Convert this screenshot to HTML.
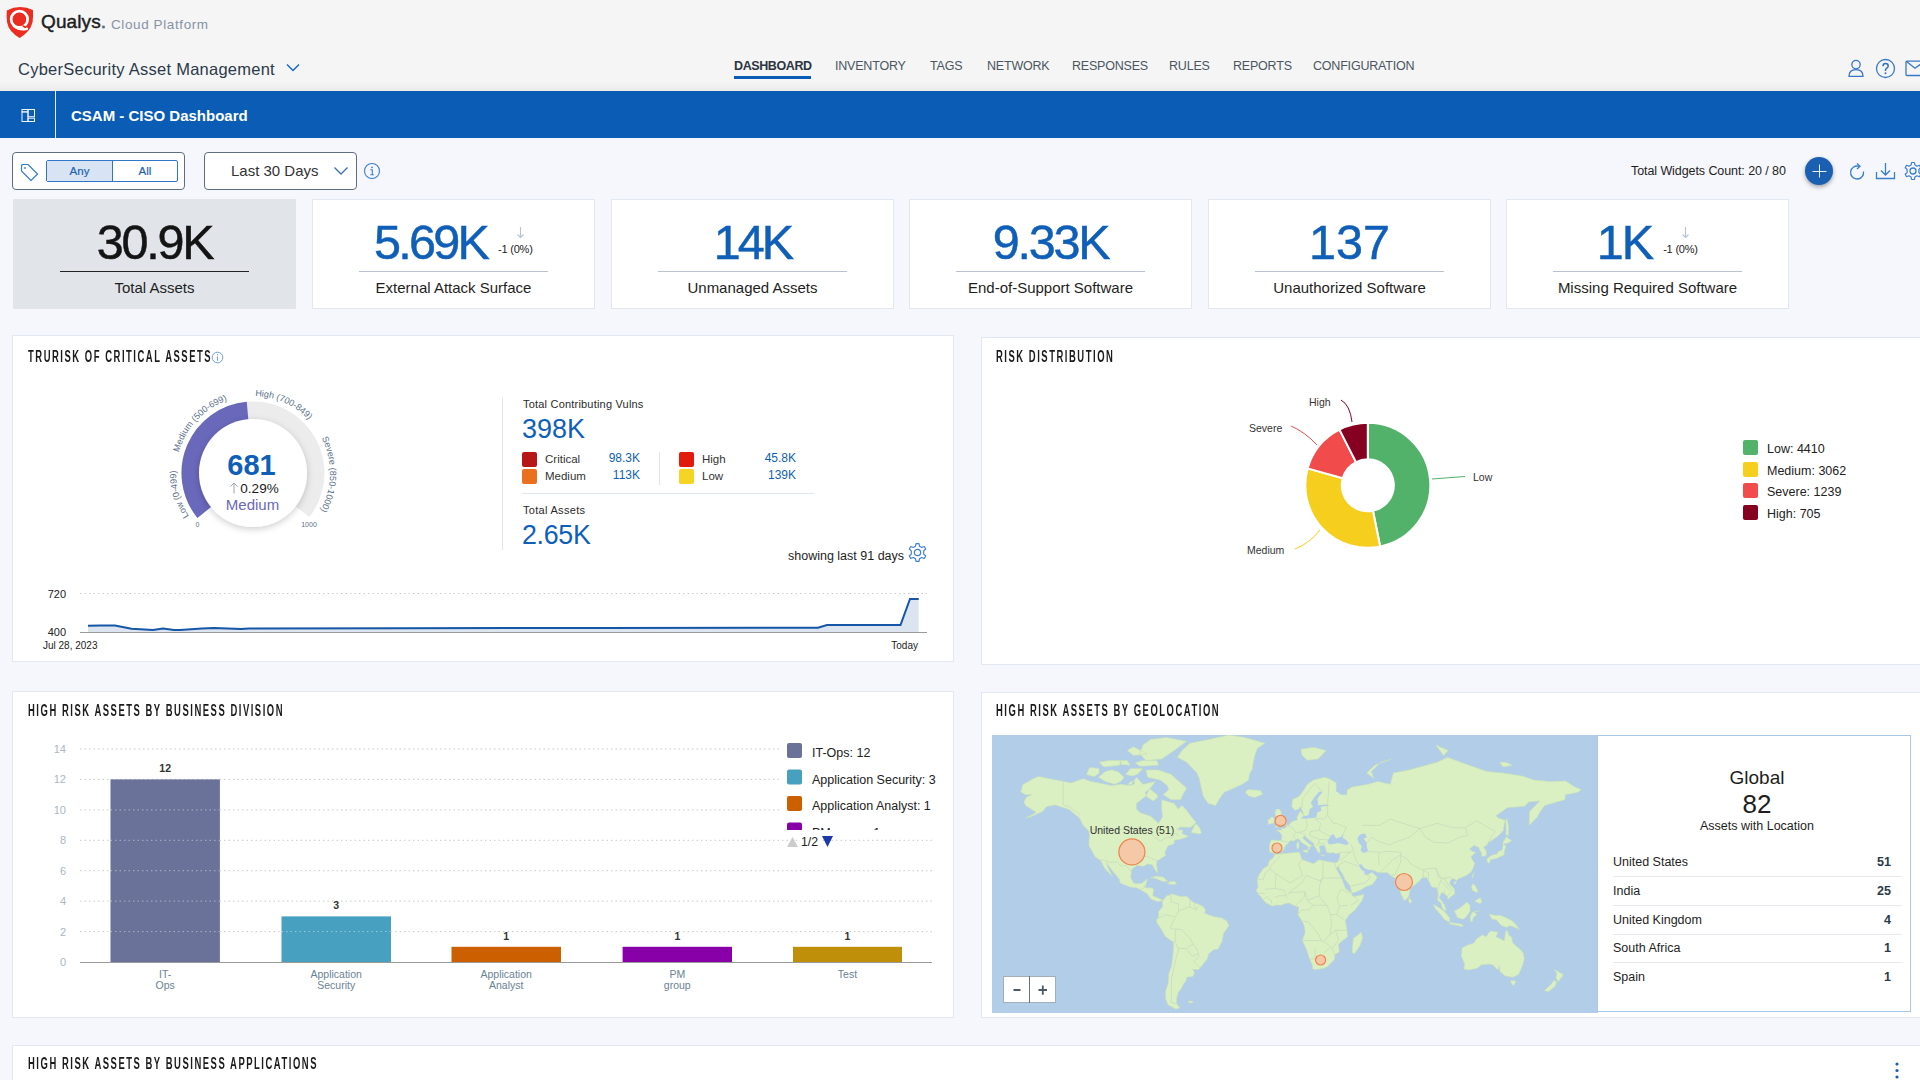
<!DOCTYPE html>
<html><head><meta charset="utf-8">
<style>
*{box-sizing:border-box;margin:0;padding:0}
html,body{width:1920px;height:1080px;overflow:hidden}
body{font-family:"Liberation Sans",sans-serif;background:#f5f7fc;position:relative;color:#222}
.abs{position:absolute}
#hdr{position:absolute;left:0;top:0;width:1920px;height:91px;background:linear-gradient(#f5f5f5 0,#f5f5f5 82px,#ececec 90px,#f0e6e6 91px)}
#bluebar{position:absolute;left:0;top:91px;width:1920px;height:47px;background:#0b5cb5}
.nav{position:absolute;top:58px;font-size:12.5px;color:#4a5560;letter-spacing:-.2px;white-space:nowrap}
.card{position:absolute;background:#fff;border:1px solid #e1e8f2}
.kpi{position:absolute;top:199px;width:283px;height:110px;background:#fff;border:1px solid #e1e8f2}
.kpi .num{position:absolute;left:0;right:0;top:17px;text-align:center;font-size:48.5px;color:#0f5fb8;line-height:50px;white-space:nowrap;-webkit-text-stroke:.5px currentColor}
.kpi .dl{display:inline-block;position:relative;width:35px;height:30px;margin-left:11px;vertical-align:top;top:8px}
.kpi .dt{-webkit-text-stroke:0;position:absolute;left:0;top:16.5px;font-size:11px;line-height:14px;color:#222;letter-spacing:-.2px;white-space:nowrap}
.kpi .rule{position:absolute;left:46px;right:46px;top:71px;height:1px;background:#b9c3cf}
.kpi .lbl{position:absolute;left:0;right:0;top:278px;text-align:center;font-size:15px;color:#1e1e1e}
.wt{position:absolute;font-size:16px;font-weight:bold;color:#1b1b1b;letter-spacing:2.6px;transform-origin:0 0;transform:scaleX(.59);white-space:nowrap}
</style></head>
<body>
<div id="hdr">
  <svg class="abs" style="left:0;top:0" width="40" height="40" viewBox="0 0 40 40">
    <path d="M6.8 10.5 Q19.8 4 33 10 Q33.3 16 32.6 22 Q30.5 31.5 19.6 37.9 Q8.5 31.5 7 22 Q6.4 16 6.8 10.5 Z" fill="#ea2c21"/>
    <circle cx="19.4" cy="19.3" r="8.2" fill="none" stroke="#fff" stroke-width="2.8"/>
    <circle cx="19.4" cy="19.3" r="6.6" fill="#ea2c21"/>
    <path d="M14 26 Q19.5 30.5 26.8 28.8" fill="none" stroke="#fff" stroke-width="2.6" stroke-linecap="round"/>
    <path d="M22.5 25.6 L26 27.5" fill="none" stroke="#ea2c21" stroke-width="1.6"/>
  </svg>
  <div class="abs" style="left:41px;top:11px;font-size:19px;color:#1e1e1e;letter-spacing:.1px;-webkit-text-stroke:.45px #1e1e1e">Qualys<span style="color:#8a94a6">.</span></div>
  <div class="abs" style="left:111px;top:17px;font-size:13.5px;color:#8893a5;letter-spacing:.6px">Cloud Platform</div>
  <div class="abs" style="left:18px;top:60px;font-size:16.5px;color:#2b3a4a;letter-spacing:.25px">CyberSecurity Asset Management</div>
  <svg class="abs" style="left:286px;top:63px" width="14" height="9" viewBox="0 0 14 9"><path d="M1 1.5 L7 7.5 L13 1.5" fill="none" stroke="#1a6bc4" stroke-width="1.5"/></svg>
  <div class="nav" style="top:59px;left:734px;font-weight:bold;color:#2b3440;letter-spacing:-.4px">DASHBOARD</div>
  <div class="abs" style="left:734px;top:76px;width:77px;height:3px;background:#0b5cb5"></div>
  <div class="nav" style="top:59px;left:835px">INVENTORY</div>
  <div class="nav" style="top:59px;left:930px">TAGS</div>
  <div class="nav" style="top:59px;left:987px">NETWORK</div>
  <div class="nav" style="top:59px;left:1072px">RESPONSES</div>
  <div class="nav" style="top:59px;left:1169px">RULES</div>
  <div class="nav" style="top:59px;left:1233px">REPORTS</div>
  <div class="nav" style="top:59px;left:1313px">CONFIGURATION</div>
  <!-- user/help/mail icons -->
  <svg class="abs" style="left:1846px;top:58px" width="20" height="20" viewBox="0 0 20 20"><circle cx="10" cy="6.6" r="4.2" fill="none" stroke="#3a78c6" stroke-width="1.3"/><path d="M3 18.3 Q3 11.6 10 11.6 Q17 11.6 17 18.3 Z" fill="none" stroke="#3a78c6" stroke-width="1.3"/></svg>
  <svg class="abs" style="left:1875px;top:58px" width="21" height="21" viewBox="0 0 21 21"><circle cx="10.5" cy="10.5" r="9" fill="none" stroke="#3a78c6" stroke-width="1.3"/><path d="M8 8.2 Q8 5.5 10.6 5.5 Q13.2 5.5 13.2 8 Q13.2 9.5 11.5 10.3 Q10.5 10.8 10.5 12.3 V13" fill="none" stroke="#2f6fc0" stroke-width="1.5"/><circle cx="10.5" cy="15.3" r=".95" fill="#2f6fc0"/></svg>
  <svg class="abs" style="left:1905px;top:60px" width="15" height="17" viewBox="0 0 15 17"><rect x="1" y="1.2" width="20" height="14.3" rx="1" fill="none" stroke="#3a78c6" stroke-width="1.3"/><path d="M1.5 1.5 L10 8.3 L20 1" fill="none" stroke="#3a78c6" stroke-width="1.3"/></svg>
</div>
<div id="bluebar">
  <div class="abs" style="left:55px;top:0;width:1px;height:47px;background:#e8eef8"></div>
  <svg class="abs" style="left:21px;top:17px" width="15" height="15" viewBox="0 0 15 15" fill="none" stroke="#eef4fc" stroke-width="1"><rect x="1" y="1.5" width="6" height="2.4"/><rect x="1" y="3.9" width="6" height="9.6"/><rect x="7" y="1.5" width="6.5" height="7.2"/><rect x="7" y="10.2" width="6.5" height="3.3"/></svg>
  <div class="abs" style="left:71px;top:16px;font-size:15px;font-weight:bold;color:#fff">CSAM - CISO Dashboard</div>
</div>

<!-- filter row -->
<div class="abs" style="left:12px;top:152px;width:173px;height:38px;border:1px solid #5f6e7e;border-radius:4px;background:#fff"></div>
<svg class="abs" style="left:20px;top:163px" width="20" height="20" viewBox="0 0 20 20"><path d="M1.5 2.5 L1.5 8 L11 17.5 L17.5 11 L8 1.5 L2.5 1.5 Z" fill="none" stroke="#3a7fcf" stroke-width="1.2" stroke-linejoin="round"/><circle cx="5" cy="5" r="0.9" fill="#3a7fcf"/></svg>
<div class="abs" style="left:46px;top:160px;width:132px;height:22px;border:1px solid #2f78c8;border-radius:2px;background:#fff"></div>
<div class="abs" style="left:47px;top:161px;width:65px;height:20px;background:#d8e4f3"></div>
<div class="abs" style="left:112px;top:161px;width:1px;height:20px;background:#2f78c8"></div>
<div class="abs" style="left:47px;top:164.5px;width:65px;text-align:center;font-size:11.5px;color:#1e64b4;-webkit-text-stroke:.2px #1e64b4">Any</div>
<div class="abs" style="left:113px;top:164.5px;width:64px;text-align:center;font-size:11.5px;color:#1e64b4;-webkit-text-stroke:.2px #1e64b4">All</div>
<div class="abs" style="left:204px;top:152px;width:153px;height:38px;border:1px solid #5f6e7e;border-radius:4px;background:#fff"></div>
<div class="abs" style="left:231px;top:162px;font-size:15px;color:#333">Last 30 Days</div>
<svg class="abs" style="left:333px;top:166px" width="16" height="10" viewBox="0 0 16 10"><path d="M1.5 1.5 L8 8 L14.5 1.5" fill="none" stroke="#3a6fb5" stroke-width="1.3"/></svg>
<svg class="abs" style="left:363px;top:162px" width="18" height="18" viewBox="0 0 18 18"><circle cx="9" cy="9" r="7.5" fill="none" stroke="#3a7fcf" stroke-width="1.1"/><circle cx="9" cy="5.3" r="0.9" fill="#3a7fcf"/><path d="M7.3 7.8 H9.3 V12.8 M7.3 12.8 H10.8" fill="none" stroke="#3a7fcf" stroke-width="1.1"/></svg>
<div class="abs" style="left:1631px;top:164px;font-size:12.5px;color:#1e1e1e;white-space:nowrap;letter-spacing:-.08px">Total Widgets Count: 20 / 80</div>
<div class="abs" style="left:1805px;top:157px;width:28px;height:28px;border-radius:50%;background:#1a5fb0;box-shadow:0 2px 4px rgba(0,0,0,.35)"></div>
<svg class="abs" style="left:1809px;top:161px" width="20" height="20" viewBox="0 0 20 20"><path d="M10.5 3.5 V16.5 M3.5 10.5 H17.5" stroke="#fff" stroke-width=".9"/></svg>
<svg class="abs" style="left:1847.5px;top:162px" width="20" height="22" viewBox="0 0 20 22"><path d="M15.5 9.5 A6.5 6.5 0 1 1 11 4.3" fill="none" stroke="#3a7fcf" stroke-width="1.3"/><path d="M9 1.5 L12 4.3 L9 7" fill="none" stroke="#3a7fcf" stroke-width="1.3"/></svg>
<svg class="abs" style="left:1875px;top:162px" width="21" height="18" viewBox="0 0 21 18"><path d="M1.5 10 V16.5 H19.5 V10 M10.5 1 V13 M6 8.5 L10.5 13 L15 8.5" fill="none" stroke="#3a7fcf" stroke-width="1.3"/></svg>
<svg class="abs" style="left:1903px;top:161px" width="20" height="20" viewBox="0 0 20 20"><circle cx="10" cy="10" r="3" fill="none" stroke="#3a7fcf" stroke-width="1.3"/><path d="M8.6 1.5 H11.4 L11.9 4 L14 5.2 L16.4 4.3 L17.8 6.7 L15.9 8.4 V11.6 L17.8 13.3 L16.4 15.7 L14 14.8 L11.9 16 L11.4 18.5 H8.6 L8.1 16 L6 14.8 L3.6 15.7 L2.2 13.3 L4.1 11.6 V8.4 L2.2 6.7 L3.6 4.3 L6 5.2 L8.1 4 Z" fill="none" stroke="#3a7fcf" stroke-width="1.2" stroke-linejoin="round"/></svg>

<!-- KPI cards -->
<div class="kpi" style="left:13px;background:#e1e5ea;border-color:#e1e5ea"><div class="num" style="color:#141414;"><span style="letter-spacing:-2.25px">30.9K</span></div><div class="rule" style="background:#222"></div><div class="lbl" style="top:79px">Total Assets</div></div>
<div class="kpi" style="left:312px"><div class="num" style=""><span style="letter-spacing:-2.75px">5.69K</span><span class="dl"><svg width="34" height="30" viewBox="0 0 34 30" style="position:absolute;left:0;top:0"><path d="M22.5 2 V12.5 M19.5 9.5 L22.5 12.5 L25.5 9.5" fill="none" stroke="#b5c3d3" stroke-width="1.1"/></svg><span class="dt">-1 (0%)</span></span></div><div class="rule"></div><div class="lbl" style="top:79px">External Attack Surface</div></div>
<div class="kpi" style="left:611px"><div class="num" style=""><span style="letter-spacing:-3px">14K</span></div><div class="rule"></div><div class="lbl" style="top:79px">Unmanaged Assets</div></div>
<div class="kpi" style="left:909px"><div class="num" style=""><span style="letter-spacing:-2.25px">9.33K</span></div><div class="rule"></div><div class="lbl" style="top:79px">End-of-Support Software</div></div>
<div class="kpi" style="left:1208px"><div class="num" style=""><span style="letter-spacing:0px">137</span></div><div class="rule"></div><div class="lbl" style="top:79px">Unauthorized Software</div></div>
<div class="kpi" style="left:1506px"><div class="num" style=""><span style="letter-spacing:-2px">1K</span><span class="dl"><svg width="34" height="30" viewBox="0 0 34 30" style="position:absolute;left:0;top:0"><path d="M22.5 2 V12.5 M19.5 9.5 L22.5 12.5 L25.5 9.5" fill="none" stroke="#b5c3d3" stroke-width="1.1"/></svg><span class="dt">-1 (0%)</span></span></div><div class="rule"></div><div class="lbl" style="top:79px">Missing Required Software</div></div>
<!-- widget frames -->
<div class="card" style="left:12px;top:335px;width:942px;height:327px"></div>
<div class="card" style="left:981px;top:337px;width:960px;height:328px"></div>
<div class="card" style="left:12px;top:691px;width:942px;height:327px"></div>
<div class="card" style="left:981px;top:692px;width:960px;height:326px"></div>
<div class="card" style="left:12px;top:1045px;width:1930px;height:60px"></div>
<div class="wt" style="left:28px;top:348px">TRURISK OF CRITICAL ASSETS</div>
<div class="wt" style="left:996px;top:348px">RISK DISTRIBUTION</div>
<div class="wt" style="left:28px;top:702px">HIGH RISK ASSETS BY BUSINESS DIVISION</div>
<div class="wt" style="left:996px;top:702px">HIGH RISK ASSETS BY GEOLOCATION</div>
<div class="wt" style="left:28px;top:1055px">HIGH RISK ASSETS BY BUSINESS APPLICATIONS</div>

<!-- gauge -->
<svg class="abs" style="left:0;top:0;overflow:visible" width="960" height="680">
 <defs><filter id="sh" x="-30%" y="-30%" width="160%" height="160%"><feDropShadow dx="0" dy="2" stdDeviation="3.5" flood-color="#000" flood-opacity=".2"/></filter></defs>
 <path d="M197.43 518.00 A71.5 71.5 0 1 1 309.34 517.02 L292.40 503.78 A50 50 0 1 0 214.14 504.47 Z" fill="#ececec"/>
 <path d="M197.43 518.00 A71.5 71.5 0 0 1 246.77 401.77 L248.64 423.19 A50 50 0 0 0 214.14 504.47 Z" fill="#6a68bb"/>
 <circle cx="253" cy="473" r="54" fill="#fff" filter="url(#sh)"/>
 <text x="251.5" y="475" text-anchor="middle" font-family="Liberation Sans" font-weight="bold" font-size="29" fill="#0f5fb8">681</text>
 <text x="259.5" y="493" text-anchor="middle" font-family="Liberation Sans" font-size="13.5" fill="#1b1b1b">0.29%</text>
 <path d="M234 493.5 V483 M230.5 486.5 L234 483 L237.5 486.5" fill="none" stroke="#9aa6b3" stroke-width="1"/>
 <text x="252.5" y="510" text-anchor="middle" font-family="Liberation Sans" font-size="15" fill="#6a68bb">Medium</text>
 <text x="197.5" y="527" text-anchor="middle" font-family="Liberation Sans" font-size="7" fill="#5a6f84">0</text>
 <text x="309" y="527" text-anchor="middle" font-family="Liberation Sans" font-size="7" fill="#5a6f84">1000</text>
</svg>
<svg class="abs" style="left:0;top:0;overflow:visible" width="960" height="680"><path id="g1" d="M209.94 536.84 A77 77 0 0 1 182.66 441.68" fill="none"/><text font-family="Liberation Sans" font-size="9" fill="#5a7088"><textPath href="#g1" startOffset="50%" text-anchor="middle">Low (0-499)</textPath></text><path id="g2" d="M176.11 468.97 A77 77 0 0 1 243.62 396.57" fill="none"/><text font-family="Liberation Sans" font-size="9" fill="#5a7088"><textPath href="#g2" startOffset="50%" text-anchor="middle">Medium (500-699)</textPath></text><path id="g3" d="M231.78 398.98 A77 77 0 0 1 322.21 439.25" fill="none"/><text font-family="Liberation Sans" font-size="9" fill="#5a7088"><textPath href="#g3" startOffset="50%" text-anchor="middle">High (700-849)</textPath></text><path id="g4" d="M312.84 424.54 A77 77 0 0 1 311.11 523.52" fill="none"/><text font-family="Liberation Sans" font-size="9" fill="#5a7088"><textPath href="#g4" startOffset="50%" text-anchor="middle">Severe (850-1000)</textPath></text></svg>
<div class="abs" style="left:502px;top:397px;width:1px;height:153px;background:#dfe5ec"></div>
<div class="abs" style="left:523px;top:397.5px;font-size:11px;color:#2a2a2a;letter-spacing:.2px">Total Contributing Vulns</div>
<div class="abs" style="left:522px;top:414px;font-size:27px;color:#0f5fb8">398K</div>
<div class="abs" style="left:522px;top:452px;width:15px;height:15px;background:#b8171a;border-radius:2px"></div>
<div class="abs" style="left:522px;top:469px;width:15px;height:15px;background:#e8701e;border-radius:2px"></div>
<div class="abs" style="left:545px;top:453px;font-size:11.5px;color:#333">Critical</div>
<div class="abs" style="left:545px;top:470px;font-size:11.5px;color:#333">Medium</div>
<div class="abs" style="left:580px;top:451px;width:60px;text-align:right;font-size:12px;color:#0f5fb8">98.3K</div>
<div class="abs" style="left:580px;top:468px;width:60px;text-align:right;font-size:12px;color:#0f5fb8">113K</div>
<div class="abs" style="left:659px;top:452px;width:1px;height:33px;background:#dfe5ec"></div>
<div class="abs" style="left:679px;top:452px;width:15px;height:15px;background:#e21b0c;border-radius:2px"></div>
<div class="abs" style="left:679px;top:469px;width:15px;height:15px;background:#f5d423;border-radius:2px"></div>
<div class="abs" style="left:702px;top:453px;font-size:11.5px;color:#333">High</div>
<div class="abs" style="left:702px;top:470px;font-size:11.5px;color:#333">Low</div>
<div class="abs" style="left:736px;top:451px;width:60px;text-align:right;font-size:12px;color:#0f5fb8">45.8K</div>
<div class="abs" style="left:736px;top:468px;width:60px;text-align:right;font-size:12px;color:#0f5fb8">139K</div>
<div class="abs" style="left:522px;top:493px;width:292px;height:1px;background:#dfe5ec"></div>
<div class="abs" style="left:523px;top:504px;font-size:11px;color:#2a2a2a;letter-spacing:.3px">Total Assets</div>
<div class="abs" style="left:522px;top:519.5px;font-size:26.8px;color:#0f5fb8;letter-spacing:-.3px">2.65K</div>
<div class="abs" style="left:788px;top:549px;font-size:12.5px;color:#1e1e1e">showing last 91 days</div>
<svg class="abs" style="left:907px;top:542px" width="21" height="21" viewBox="0 0 20 20"><circle cx="10" cy="10" r="3" fill="none" stroke="#3a7fcf" stroke-width="1.2"/><path d="M8.6 1.5 H11.4 L11.9 4 L14 5.2 L16.4 4.3 L17.8 6.7 L15.9 8.4 V11.6 L17.8 13.3 L16.4 15.7 L14 14.8 L11.9 16 L11.4 18.5 H8.6 L8.1 16 L6 14.8 L3.6 15.7 L2.2 13.3 L4.1 11.6 V8.4 L2.2 6.7 L3.6 4.3 L6 5.2 L8.1 4 Z" fill="none" stroke="#3a7fcf" stroke-width="1.1" stroke-linejoin="round"/></svg>

<svg class="abs" style="left:0;top:0;overflow:visible" width="960" height="680">
 <line x1="80" y1="593.5" x2="927" y2="593.5" stroke="#c8c8c8" stroke-width="1" stroke-dasharray="1.5 3"/>
 <path d="M88 625.8 L100 625.6 L115 625.4 L131.5 628.7 L153 630 L163 628.6 L174 630 L180 630 L202 628.4 L214 628 L241 629 L249 628.5 L400 628.2 L600 628 L818 627.7 L827 625 L900.5 625 L910 599 L918.7 599 L918.7 632.5 L88 632.5 Z" fill="#dbe4ef"/>
 <path d="M88 625.8 L100 625.6 L115 625.4 L131.5 628.7 L153 630 L163 628.6 L174 630 L180 630 L202 628.4 L214 628 L241 629 L249 628.5 L400 628.2 L600 628 L818 627.7 L827 625 L900.5 625 L910 599 L918.7 599" fill="none" stroke="#1556a6" stroke-width="2"/>
 <line x1="80" y1="632.5" x2="927" y2="632.5" stroke="#9a9a9a" stroke-width="1"/>
 <text x="66" y="598" text-anchor="end" font-family="Liberation Sans" font-size="11" fill="#222">720</text>
 <text x="66" y="636" text-anchor="end" font-family="Liberation Sans" font-size="11" fill="#222">400</text>
 <text x="43" y="649" font-family="Liberation Sans" font-size="10" fill="#222">Jul 28, 2023</text>
 <text x="918" y="649" text-anchor="end" font-family="Liberation Sans" font-size="10" fill="#222">Today</text>
</svg>
<svg class="abs" style="left:211px;top:351px" width="13" height="13" viewBox="0 0 13 13"><circle cx="6.5" cy="6.5" r="5.3" fill="none" stroke="#6a9fdc" stroke-width="1"/><path d="M6.5 5.5 V9.8" stroke="#6a9fdc" stroke-width="1"/><circle cx="6.5" cy="3.7" r=".6" fill="#6a9fdc"/></svg>

<svg class="abs" style="left:0;top:0;overflow:visible" width="1920" height="680">
<path d="M1367.80 422.80 A62.5 62.5 0 0 1 1380.15 546.57 L1372.94 510.79 A26 26 0 0 0 1367.80 459.30 Z" fill="#52b26a" stroke="#fff" stroke-width="2" stroke-linejoin="round"/><path d="M1380.15 546.57 A62.5 62.5 0 0 1 1307.62 468.41 L1342.77 478.28 A26 26 0 0 0 1372.94 510.79 Z" fill="#f6cf1e" stroke="#fff" stroke-width="2" stroke-linejoin="round"/><path d="M1307.62 468.41 A62.5 62.5 0 0 1 1339.47 429.59 L1356.01 462.12 A26 26 0 0 0 1342.77 478.28 Z" fill="#f24b4b" stroke="#fff" stroke-width="2" stroke-linejoin="round"/><path d="M1339.47 429.59 A62.5 62.5 0 0 1 1367.80 422.80 L1367.80 459.30 A26 26 0 0 0 1356.01 462.12 Z" fill="#860022" stroke="#fff" stroke-width="2" stroke-linejoin="round"/>
<path d="M1432 479 L1465 476.5" fill="none" stroke="#52b26a" stroke-width="1"/>
<path d="M1320 530 Q1310 543 1295 549" fill="none" stroke="#f6cf1e" stroke-width="1"/>
<path d="M1317 445 Q1305 432 1291 426" fill="none" stroke="#f24b4b" stroke-width="1"/>
<path d="M1352 422 Q1350 405 1341 400" fill="none" stroke="#860022" stroke-width="1"/>
<text x="1473" y="481" font-family="Liberation Sans" font-size="10.5" fill="#333">Low</text>
<text x="1247" y="554" font-family="Liberation Sans" font-size="10.5" fill="#333">Medium</text>
<text x="1249" y="432" font-family="Liberation Sans" font-size="10.5" fill="#333">Severe</text>
<text x="1309" y="406" font-family="Liberation Sans" font-size="10.5" fill="#333">High</text>
<rect x="1743" y="440" width="15" height="15" rx="2" fill="#52b26a"/>
<rect x="1743" y="462" width="15" height="15" rx="2" fill="#f6cf1e"/>
<rect x="1743" y="483" width="15" height="15" rx="2" fill="#f24b4b"/>
<rect x="1743" y="505" width="15" height="15" rx="2" fill="#860022"/>
<text x="1767" y="453" font-family="Liberation Sans" font-size="12.5" fill="#222">Low: 4410</text>
<text x="1767" y="475" font-family="Liberation Sans" font-size="12.5" fill="#222">Medium: 3062</text>
<text x="1767" y="496" font-family="Liberation Sans" font-size="12.5" fill="#222">Severe: 1239</text>
<text x="1767" y="518" font-family="Liberation Sans" font-size="12.5" fill="#222">High: 705</text>
</svg>

<svg class="abs" style="left:0;top:0;overflow:visible" width="960" height="1080">
<line x1="80" y1="931.6" x2="932" y2="931.6" stroke="#c9c9c9" stroke-width="1" stroke-dasharray="1.5 3"/><line x1="80" y1="901.1" x2="932" y2="901.1" stroke="#c9c9c9" stroke-width="1" stroke-dasharray="1.5 3"/><line x1="80" y1="870.7" x2="932" y2="870.7" stroke="#c9c9c9" stroke-width="1" stroke-dasharray="1.5 3"/><line x1="80" y1="840.3" x2="932" y2="840.3" stroke="#c9c9c9" stroke-width="1" stroke-dasharray="1.5 3"/><line x1="80" y1="809.9" x2="932" y2="809.9" stroke="#c9c9c9" stroke-width="1" stroke-dasharray="1.5 3"/><line x1="80" y1="779.4" x2="932" y2="779.4" stroke="#c9c9c9" stroke-width="1" stroke-dasharray="1.5 3"/><line x1="80" y1="749.0" x2="932" y2="749.0" stroke="#c9c9c9" stroke-width="1" stroke-dasharray="1.5 3"/><text x="66" y="966.0" text-anchor="end" font-family="Liberation Sans" font-size="11" fill="#a9b7c6">0</text><text x="66" y="935.6" text-anchor="end" font-family="Liberation Sans" font-size="11" fill="#a9b7c6">2</text><text x="66" y="905.1" text-anchor="end" font-family="Liberation Sans" font-size="11" fill="#a9b7c6">4</text><text x="66" y="874.7" text-anchor="end" font-family="Liberation Sans" font-size="11" fill="#a9b7c6">6</text><text x="66" y="844.3" text-anchor="end" font-family="Liberation Sans" font-size="11" fill="#a9b7c6">8</text><text x="66" y="813.9" text-anchor="end" font-family="Liberation Sans" font-size="11" fill="#a9b7c6">10</text><text x="66" y="783.4" text-anchor="end" font-family="Liberation Sans" font-size="11" fill="#a9b7c6">12</text><text x="66" y="753.0" text-anchor="end" font-family="Liberation Sans" font-size="11" fill="#a9b7c6">14</text><rect x="110.5" y="779.4" width="109.4" height="182.6" fill="#6b7299"/><text x="165.2" y="772.4" text-anchor="middle" font-family="Liberation Sans" font-weight="bold" font-size="10.5" fill="#333">12</text><text x="165.2" y="978" text-anchor="middle" font-family="Liberation Sans" font-size="10.5" fill="#6b8296">IT-</text><text x="165.2" y="989" text-anchor="middle" font-family="Liberation Sans" font-size="10.5" fill="#6b8296">Ops</text><rect x="281.5" y="916.4" width="109.5" height="45.6" fill="#47a0c0"/><text x="336.2" y="909.4" text-anchor="middle" font-family="Liberation Sans" font-weight="bold" font-size="10.5" fill="#333">3</text><text x="336.2" y="978" text-anchor="middle" font-family="Liberation Sans" font-size="10.5" fill="#6b8296">Application</text><text x="336.2" y="989" text-anchor="middle" font-family="Liberation Sans" font-size="10.5" fill="#6b8296">Security</text><rect x="451.5" y="946.8" width="109.5" height="15.2" fill="#cc6000"/><text x="506.2" y="939.8" text-anchor="middle" font-family="Liberation Sans" font-weight="bold" font-size="10.5" fill="#333">1</text><text x="506.2" y="978" text-anchor="middle" font-family="Liberation Sans" font-size="10.5" fill="#6b8296">Application</text><text x="506.2" y="989" text-anchor="middle" font-family="Liberation Sans" font-size="10.5" fill="#6b8296">Analyst</text><rect x="622.6" y="946.8" width="109.4" height="15.2" fill="#8800a8"/><text x="677.3" y="939.8" text-anchor="middle" font-family="Liberation Sans" font-weight="bold" font-size="10.5" fill="#333">1</text><text x="677.3" y="978" text-anchor="middle" font-family="Liberation Sans" font-size="10.5" fill="#6b8296">PM</text><text x="677.3" y="989" text-anchor="middle" font-family="Liberation Sans" font-size="10.5" fill="#6b8296">group</text><rect x="793" y="946.8" width="109.0" height="15.2" fill="#bf8f0a"/><text x="847.5" y="939.8" text-anchor="middle" font-family="Liberation Sans" font-weight="bold" font-size="10.5" fill="#333">1</text><text x="847.5" y="978" text-anchor="middle" font-family="Liberation Sans" font-size="10.5" fill="#6b8296">Test</text>
<line x1="110.5" y1="931.6" x2="219.9" y2="931.6" stroke="#ffffff" stroke-opacity=".45" stroke-width="1" stroke-dasharray="1.5 3"/><line x1="281.5" y1="931.6" x2="391" y2="931.6" stroke="#ffffff" stroke-opacity=".45" stroke-width="1" stroke-dasharray="1.5 3"/><line x1="110.5" y1="901.1" x2="219.9" y2="901.1" stroke="#ffffff" stroke-opacity=".45" stroke-width="1" stroke-dasharray="1.5 3"/><line x1="110.5" y1="870.7" x2="219.9" y2="870.7" stroke="#ffffff" stroke-opacity=".45" stroke-width="1" stroke-dasharray="1.5 3"/><line x1="110.5" y1="840.3" x2="219.9" y2="840.3" stroke="#ffffff" stroke-opacity=".45" stroke-width="1" stroke-dasharray="1.5 3"/><line x1="110.5" y1="809.9" x2="219.9" y2="809.9" stroke="#ffffff" stroke-opacity=".45" stroke-width="1" stroke-dasharray="1.5 3"/><line x1="80" y1="962.5" x2="932" y2="962.5" stroke="#9a9a9a" stroke-width="1"/>
<rect x="780" y="736" width="160" height="95" fill="#fff"/>
<rect x="787" y="743" width="15" height="15" rx="2" fill="#6b7299"/>
<rect x="787" y="769.5" width="15" height="15" rx="2" fill="#47a0c0"/>
<rect x="787" y="796" width="15" height="15" rx="2" fill="#cc6000"/>

<text x="812" y="757" font-family="Liberation Sans" font-size="12.5" fill="#222">IT-Ops: 12</text>
<text x="812" y="783.5" font-family="Liberation Sans" font-size="12.5" fill="#222">Application Security: 3</text>
<text x="812" y="810" font-family="Liberation Sans" font-size="12.5" fill="#222">Application Analyst: 1</text>
<defs><clipPath id="lgclip"><rect x="780" y="736" width="170" height="94"/></clipPath></defs><g clip-path="url(#lgclip)"><rect x="787" y="822.5" width="15" height="15" rx="2" fill="#8800a8"/><text x="812" y="836.5" font-family="Liberation Sans" font-size="12.5" fill="#222">PM group: 1</text></g>

<path d="M787 847 L792.5 837 L798 847 Z" fill="#cccccc"/>
<rect x="799" y="834" width="22" height="14" fill="#fff"/><text x="801" y="846" font-family="Liberation Sans" font-size="12.3" fill="#222">1/2</text>
<path d="M822 836 L833 836 L827.5 847 Z" fill="#1a3aa8"/>
</svg>
<!--MAP--><svg class="abs" style="left:992px;top:735px" width="606" height="278" viewBox="992 735 606 278">
<rect x="992" y="735" width="606" height="278" fill="#b1cde8"/>
<path d="M1020.8 791.9 L1022.7 784.8 L1033.3 778.7 L1038.3 776.4 L1052.1 779.3 L1063.1 781.2 L1070.9 782.9 L1083.4 778.7 L1091.2 781.5 L1099.1 782.9 L1111.6 785.6 L1121.0 784.3 L1130.4 785.6 L1136.6 777.3 L1142.9 784.3 L1155.4 781.5 L1149.2 789.6 L1146.0 796.0 L1136.6 803.3 L1136.3 808.7 L1139.8 812.5 L1150.7 816.3 L1158.6 823.3 L1162.5 816.9 L1161.7 809.1 L1161.7 799.7 L1169.5 802.1 L1174.2 803.3 L1178.1 809.1 L1182.0 805.6 L1186.7 810.3 L1191.4 816.9 L1196.1 822.3 L1193.0 825.4 L1189.9 827.5 L1180.5 827.0 L1176.6 829.5 L1182.8 829.9 L1182.0 833.5 L1186.7 835.5 L1188.3 836.4 L1180.5 839.3 L1174.2 840.3 L1174.2 843.7 L1167.9 845.9 L1166.4 848.9 L1164.8 852.3 L1165.6 855.5 L1157.0 861.1 L1156.5 864.6 L1157.8 872.7 L1155.4 870.5 L1152.3 864.8 L1147.6 863.9 L1143.7 866.3 L1136.6 865.5 L1131.5 869.7 L1130.7 877.5 L1133.5 882.9 L1136.6 883.7 L1141.3 883.5 L1147.6 878.8 L1146.0 883.7 L1145.2 887.7 L1152.3 887.9 L1153.5 889.3 L1152.8 895.7 L1159.3 898.4 L1162.6 900.4 L1157.8 901.7 L1150.7 898.9 L1146.8 893.3 L1143.7 891.7 L1137.4 888.1 L1129.6 886.9 L1120.2 882.9 L1119.1 878.8 L1114.2 873.0 L1106.1 862.4 L1108.1 868.0 L1112.4 876.4 L1108.1 872.2 L1104.5 868.0 L1100.5 860.3 L1095.0 856.8 L1092.0 850.9 L1089.0 846.1 L1088.9 841.2 L1089.7 835.1 L1088.6 830.7 L1083.4 825.8 L1079.5 818.0 L1074.0 813.6 L1069.3 809.6 L1055.2 804.9 L1046.6 806.6 L1042.7 811.4 L1030.2 816.9 L1025.8 818.0 L1036.4 812.5 L1031.0 808.9 L1025.5 805.6 L1023.9 802.1 L1026.3 797.2 L1031.7 794.7 L1025.5 794.7 Z M1229.0 735.1 L1244.7 737.4 L1265.0 743.2 L1257.2 748.6 L1254.8 755.6 L1253.3 762.2 L1252.5 768.4 L1249.4 774.4 L1248.6 780.1 L1242.3 784.3 L1230.6 789.6 L1224.3 792.2 L1219.6 798.5 L1215.7 805.6 L1207.9 803.3 L1203.2 796.0 L1200.8 785.6 L1199.3 778.7 L1196.9 772.9 L1186.7 762.2 L1177.3 757.3 L1182.0 750.4 L1189.9 743.2 L1208.7 739.4 Z M1158.6 769.9 L1171.1 774.4 L1177.3 780.1 L1186.7 788.3 L1182.8 794.7 L1180.5 799.7 L1171.1 799.7 L1163.3 794.7 L1168.7 789.6 L1167.2 785.6 L1160.1 780.1 L1147.6 777.3 L1146.0 769.9 Z M1105.3 771.5 L1098.3 777.3 L1105.3 781.5 L1114.7 784.3 L1121.0 781.5 L1124.1 777.3 L1117.9 771.5 L1111.6 769.9 Z M1166.4 737.4 L1186.7 741.3 L1174.2 750.4 L1161.7 758.9 L1146.0 760.6 L1139.8 753.9 L1142.9 745.0 L1150.7 739.4 Z M1089.7 767.5 L1086.5 774.4 L1094.4 776.7 L1099.1 772.9 L1099.1 768.4 Z M1157.0 760.6 L1158.6 765.3 L1139.8 766.3 L1135.1 762.8 L1142.9 760.6 Z M1099.1 762.2 L1103.8 766.9 L1119.4 765.3 L1121.0 760.6 L1108.5 760.6 Z M1142.9 768.4 L1137.4 774.4 L1131.9 775.9 L1125.7 774.4 L1130.4 768.4 Z M1130.4 781.5 L1128.0 784.3 L1133.5 784.8 L1135.1 782.1 Z M1127.2 760.6 L1130.4 765.3 L1121.0 764.4 L1121.0 760.6 Z M1133.5 746.8 L1147.6 753.9 L1133.5 755.6 L1127.2 750.4 Z M1149.9 788.8 L1145.2 792.2 L1146.8 796.7 L1153.1 800.9 L1157.8 797.2 L1157.3 794.7 L1153.9 792.2 Z M1196.9 824.2 L1200.0 828.5 L1201.3 832.5 L1200.0 834.1 L1191.1 832.5 L1193.0 828.5 L1195.3 824.2 Z M1156.2 876.0 L1163.3 877.2 L1167.6 881.3 L1162.5 881.4 L1155.4 878.3 L1150.9 878.0 Z M1170.3 881.4 L1175.0 881.6 L1176.6 884.0 L1172.6 884.5 L1167.3 883.7 Z M1247.8 789.6 L1260.3 790.4 L1262.7 794.2 L1254.8 797.5 L1248.6 796.0 L1245.4 792.2 Z M1171.1 893.8 L1180.5 896.5 L1187.0 896.2 L1189.9 899.7 L1193.8 902.8 L1199.3 904.4 L1203.2 906.7 L1205.5 909.9 L1204.7 913.0 L1207.9 914.6 L1214.9 916.9 L1221.2 917.7 L1226.7 920.8 L1229.0 925.6 L1223.5 933.5 L1222.0 941.5 L1218.0 949.3 L1214.1 949.6 L1208.7 953.8 L1207.4 958.8 L1202.4 964.9 L1198.5 969.8 L1192.4 969.2 L1194.6 972.4 L1193.0 976.4 L1186.7 977.3 L1186.0 981.0 L1183.6 983.8 L1181.3 988.6 L1178.1 992.5 L1176.6 998.5 L1176.6 1003.3 L1179.7 1008.0 L1175.8 1009.1 L1167.9 1004.8 L1165.6 998.5 L1165.6 991.5 L1168.3 982.9 L1168.7 973.7 L1171.5 966.6 L1172.8 956.3 L1173.4 949.6 L1173.7 942.3 L1165.6 936.7 L1160.9 928.7 L1156.8 922.4 L1156.5 920.0 L1158.6 916.9 L1158.6 911.4 L1162.6 906.7 L1162.3 901.2 L1164.0 899.2 L1166.7 895.7 L1170.3 894.9 Z M1274.6 854.5 L1299.5 852.1 L1301.8 859.4 L1313.5 863.7 L1319.0 859.8 L1330.0 862.0 L1334.4 862.5 L1334.8 864.8 L1336.9 869.7 L1341.4 878.0 L1344.1 884.5 L1345.6 888.5 L1351.6 893.3 L1351.9 894.9 L1354.3 896.5 L1364.0 894.4 L1362.1 900.4 L1355.0 909.9 L1348.8 915.3 L1345.3 920.4 L1346.9 929.5 L1347.5 936.7 L1338.3 944.2 L1339.4 952.1 L1334.8 954.5 L1334.5 959.7 L1327.6 966.4 L1323.7 968.3 L1315.1 969.8 L1312.6 968.7 L1312.4 964.9 L1309.6 959.0 L1306.5 949.5 L1302.3 940.4 L1305.1 932.7 L1304.5 927.1 L1302.9 922.4 L1297.9 914.6 L1298.5 911.4 L1298.7 907.0 L1294.8 906.0 L1289.1 903.1 L1285.4 903.4 L1280.7 905.3 L1276.8 904.9 L1272.1 906.1 L1265.8 902.8 L1263.0 899.7 L1260.3 896.0 L1257.5 893.3 L1256.4 889.8 L1258.1 886.9 L1257.2 879.6 L1259.1 874.7 L1263.4 868.5 L1268.1 865.5 L1269.1 861.1 L1273.2 857.7 Z M1361.0 931.9 L1362.7 937.5 L1360.4 944.7 L1354.6 953.8 L1352.2 952.5 L1352.4 946.4 L1353.5 938.3 L1358.9 934.3 Z M1275.0 854.1 L1276.9 852.9 L1280.7 852.7 L1284.1 849.4 L1285.1 845.9 L1287.2 844.2 L1288.7 842.2 L1290.8 840.5 L1294.0 841.0 L1295.5 839.9 L1297.7 838.6 L1299.9 840.3 L1301.3 842.4 L1304.9 844.6 L1306.5 845.7 L1308.2 846.8 L1308.2 850.5 L1309.8 848.9 L1309.6 847.0 L1311.2 846.3 L1312.8 846.8 L1308.8 843.5 L1305.1 840.3 L1303.1 838.4 L1303.1 836.6 L1305.2 836.0 L1306.2 837.4 L1309.5 840.3 L1313.5 843.1 L1314.2 845.9 L1316.2 848.7 L1317.6 851.4 L1319.0 853.4 L1320.4 850.7 L1319.5 848.1 L1319.3 845.9 L1322.2 845.5 L1324.8 845.2 L1324.8 846.8 L1325.9 849.6 L1326.5 852.3 L1330.0 853.0 L1333.1 852.5 L1336.2 853.7 L1339.4 852.7 L1339.8 853.7 L1340.0 856.6 L1338.9 859.1 L1337.7 862.0 L1334.7 862.9 L1334.8 864.8 L1337.3 868.3 L1338.6 865.5 L1339.7 869.7 L1343.0 874.7 L1344.9 879.6 L1350.3 886.1 L1351.6 892.9 L1354.3 892.5 L1360.5 890.1 L1365.7 886.8 L1372.3 884.5 L1375.4 880.5 L1377.4 877.2 L1375.5 875.4 L1371.9 872.2 L1372.3 869.7 L1377.7 872.5 L1387.9 872.7 L1390.3 875.4 L1393.4 877.2 L1397.6 879.6 L1397.8 882.9 L1399.3 888.5 L1400.9 894.1 L1404.3 900.4 L1405.1 900.3 L1408.7 896.8 L1409.5 892.5 L1410.6 888.1 L1414.2 885.3 L1419.2 881.3 L1421.6 878.3 L1426.3 877.2 L1428.1 879.6 L1431.7 886.9 L1436.6 887.7 L1438.0 893.3 L1437.7 900.4 L1440.8 902.8 L1442.7 909.1 L1446.1 911.0 L1445.7 908.3 L1444.3 904.4 L1442.7 902.0 L1439.1 898.1 L1441.8 892.1 L1444.3 893.8 L1447.4 896.5 L1447.9 899.5 L1450.8 896.7 L1454.8 893.8 L1454.1 888.5 L1449.4 883.7 L1451.0 879.6 L1453.7 878.7 L1456.8 880.5 L1458.4 878.8 L1462.3 877.2 L1466.2 875.5 L1471.0 872.2 L1473.2 868.0 L1474.8 863.2 L1473.2 861.1 L1470.9 856.8 L1475.6 852.3 L1472.5 851.4 L1469.3 849.0 L1474.0 845.4 L1478.4 847.2 L1479.5 849.2 L1481.4 852.9 L1481.8 856.6 L1486.1 855.7 L1486.4 851.4 L1483.6 847.2 L1486.9 845.0 L1488.4 842.2 L1490.5 841.2 L1497.5 836.4 L1503.3 830.5 L1504.2 824.4 L1505.2 820.2 L1498.3 818.0 L1495.9 815.8 L1507.7 807.5 L1517.1 807.0 L1524.9 806.1 L1528.8 801.9 L1539.8 800.9 L1529.6 811.4 L1529.1 825.4 L1537.4 816.9 L1539.0 813.6 L1544.5 805.6 L1554.6 802.6 L1564.8 799.7 L1565.6 794.7 L1571.9 793.5 L1578.1 792.2 L1581.3 789.6 L1575.0 787.0 L1565.6 781.0 L1549.9 781.5 L1534.3 780.1 L1521.8 775.9 L1503.0 772.9 L1487.3 771.5 L1482.6 769.9 L1460.7 762.2 L1447.4 757.3 L1437.2 762.2 L1409.0 769.9 L1393.4 772.9 L1390.3 784.3 L1377.7 781.5 L1368.3 784.3 L1351.9 787.0 L1347.2 790.1 L1346.4 794.7 L1336.2 790.9 L1336.2 782.9 L1329.2 778.7 L1324.5 777.3 L1313.5 780.1 L1307.3 784.3 L1304.2 789.6 L1299.5 796.0 L1292.4 799.7 L1291.9 806.8 L1294.8 810.3 L1298.7 809.1 L1300.2 806.8 L1302.1 810.3 L1303.7 814.7 L1304.2 816.0 L1300.2 810.9 L1297.0 816.9 L1297.1 820.2 L1294.8 820.6 L1291.0 822.3 L1289.3 824.8 L1286.9 825.4 L1286.1 827.5 L1283.8 828.5 L1281.5 828.1 L1281.5 830.1 L1276.4 830.3 L1279.9 832.5 L1281.9 835.5 L1281.5 840.3 L1277.9 840.5 L1271.3 840.1 L1269.9 843.1 L1269.2 847.8 L1269.7 852.3 L1272.1 852.3 Z M1506.0 836.6 L1511.6 840.7 L1508.1 843.1 L1503.0 844.1 L1506.1 845.9 L1504.5 850.5 L1504.2 855.0 L1500.2 856.6 L1496.4 858.5 L1490.8 859.4 L1489.4 862.9 L1487.8 862.9 L1486.7 859.1 L1488.9 857.3 L1492.0 855.0 L1497.0 854.1 L1498.0 851.8 L1502.2 850.0 L1503.0 845.9 L1502.8 844.1 L1503.4 841.2 L1505.6 838.4 Z M1506.9 818.4 L1508.5 825.4 L1508.5 835.5 L1506.1 835.1 L1506.1 827.5 L1505.8 820.2 Z M1474.0 872.5 L1472.9 878.0 L1472.0 876.4 Z M1456.8 881.3 L1455.2 884.2 L1453.8 883.4 L1455.2 881.3 Z M1409.0 897.6 L1412.0 901.2 L1410.0 903.6 L1408.7 901.2 Z M1472.9 883.7 L1475.1 885.3 L1477.9 890.9 L1477.1 892.5 L1472.5 890.5 L1471.4 886.9 Z M1480.3 897.6 L1481.8 902.0 L1480.0 903.6 L1474.8 901.2 L1477.1 899.7 Z M1466.7 902.0 L1470.1 905.2 L1469.9 911.4 L1466.2 916.9 L1463.1 919.3 L1457.6 917.7 L1456.0 914.6 L1454.4 910.7 L1458.4 909.1 L1462.3 906.0 L1465.4 903.6 Z M1433.0 904.2 L1438.8 907.5 L1444.3 911.4 L1449.7 917.7 L1449.4 922.2 L1444.0 919.3 L1440.7 914.6 L1435.7 909.1 Z M1449.7 922.4 L1459.9 923.8 L1462.9 925.1 L1463.1 926.7 L1456.0 925.2 L1449.4 924.0 Z M1479.7 910.8 L1472.0 912.4 L1470.1 917.4 L1470.9 921.8 L1472.5 921.6 L1473.2 917.7 L1476.8 914.6 L1474.0 911.7 Z M1488.9 914.3 L1495.2 915.3 L1499.8 915.3 L1504.5 916.9 L1512.1 920.8 L1515.2 923.7 L1519.4 929.5 L1513.9 927.1 L1509.2 925.6 L1506.9 927.4 L1501.4 925.6 L1496.7 920.0 L1491.7 919.0 L1490.5 916.4 Z M1506.9 929.8 L1509.2 935.9 L1511.3 936.7 L1512.8 943.1 L1519.4 948.8 L1523.3 953.0 L1524.3 958.8 L1522.5 965.7 L1518.6 974.6 L1512.8 977.3 L1505.3 976.0 L1499.8 971.2 L1499.5 965.7 L1498.0 970.1 L1492.8 964.9 L1488.9 964.0 L1481.1 964.9 L1477.1 968.3 L1468.5 970.1 L1463.8 968.9 L1464.6 964.0 L1461.5 956.3 L1462.0 948.0 L1467.0 945.2 L1474.0 943.1 L1476.4 939.1 L1482.3 935.1 L1486.5 936.7 L1488.6 932.7 L1491.2 931.1 L1498.0 932.2 L1495.9 936.7 L1504.2 940.7 L1505.5 932.7 Z M1510.8 980.6 L1515.8 981.0 L1513.6 985.9 L1511.1 982.9 Z M1554.3 969.2 L1563.3 974.8 L1560.9 978.2 L1558.1 982.1 L1555.9 977.3 L1557.0 973.7 Z M1554.3 980.1 L1556.5 982.3 L1555.0 986.3 L1548.4 991.7 L1544.5 990.5 L1550.7 984.8 Z M1279.1 808.9 L1281.0 811.4 L1281.5 816.9 L1284.0 820.2 L1286.5 821.6 L1286.0 824.6 L1284.3 825.8 L1280.7 826.2 L1275.2 827.5 L1276.8 824.4 L1277.1 822.9 L1276.6 820.6 L1278.5 818.0 L1276.1 816.3 L1275.0 813.6 L1275.8 809.6 Z M1272.1 816.5 L1274.4 818.9 L1273.9 822.9 L1268.5 824.4 L1267.8 820.2 L1270.3 818.4 Z M1301.0 749.3 L1313.5 747.2 L1326.1 750.4 L1318.2 758.9 L1307.3 760.2 L1301.8 754.9 Z M1391.0 759.2 L1374.6 765.3 L1366.8 772.9 L1373.8 778.4 L1371.2 771.5 L1380.9 762.2 Z M1435.7 745.0 L1448.2 750.4 L1443.5 755.6 Z M1499.8 762.2 L1503.0 766.9 L1512.4 765.3 L1506.1 762.2 Z M1303.2 850.0 L1308.2 850.0 L1307.4 852.9 L1303.4 851.4 Z M1298.5 841.2 L1299.1 845.0 L1298.7 848.7 L1297.0 848.7 L1296.6 844.4 L1297.3 842.2 Z M1320.6 854.8 L1325.0 855.4 L1322.5 855.9 Z M1188.3 1001.0 L1193.0 1001.2 L1192.2 1003.1 L1189.1 1002.7 Z" fill="#dbf0c2" stroke="#c9e0b3" stroke-width=".6" stroke-linejoin="round"/>
<path d="M1303.8 815.8 L1301.0 818.4 L1304.9 818.7 L1312.8 818.0 L1316.7 816.9 L1317.1 812.5 L1321.4 810.7 L1320.6 806.8 L1330.0 805.6 L1325.3 804.5 L1318.2 805.2 L1317.5 798.5 L1322.9 791.4 L1319.0 791.7 L1314.3 797.2 L1310.7 803.3 L1313.2 806.8 L1309.6 809.1 L1308.8 814.7 L1306.0 816.0 Z M1329.2 844.6 L1327.2 841.8 L1328.6 838.9 L1331.5 835.1 L1333.9 834.3 L1334.7 836.4 L1336.2 838.6 L1339.4 837.2 L1341.1 836.8 L1344.1 833.1 L1343.3 835.5 L1342.5 837.4 L1346.4 840.3 L1348.9 843.9 L1345.6 845.0 L1338.6 843.1 L1333.9 843.9 Z M1361.3 833.9 L1365.2 833.5 L1366.8 837.4 L1363.6 838.4 L1366.8 843.1 L1366.8 846.8 L1368.0 850.5 L1366.8 852.3 L1363.6 852.9 L1360.5 850.5 L1361.8 845.9 L1358.9 843.1 L1357.4 839.3 L1358.2 836.4 Z M1371.9 872.2 L1368.3 874.4 L1364.7 874.7 L1364.4 871.4 L1362.1 870.5 L1359.7 867.2 L1358.9 864.6 L1361.3 864.3 L1364.1 868.0 L1368.3 869.7 L1371.9 870.0 Z M1347.2 790.1 L1346.4 794.7 L1340.9 794.7 L1336.2 790.9 L1337.0 788.8 L1343.3 789.6 Z" fill="#b1cde8"/>
<path d="M1091.2 829.5 L1135.1 829.5 L1143.7 830.5 L1151.5 834.5 L1160.1 841.2 L1167.2 837.4 L1172.6 837.4 L1175.8 832.9 L1178.1 836.4 M1063.1 781.2 L1063.1 804.9 L1069.3 806.8 L1080.3 814.7 M1100.6 860.3 L1104.2 859.9 L1110.0 862.4 L1114.7 862.4 L1117.1 861.5 L1120.2 865.5 L1122.5 866.3 L1124.9 864.9 L1131.6 871.4 M1144.3 884.8 L1144.2 887.9 L1139.5 890.1 M1281.0 840.7 L1288.7 842.2 M1287.7 825.4 L1293.2 828.5 L1295.7 832.3 L1293.2 835.5 L1295.5 839.3 M1306.0 819.1 L1307.3 825.4 L1305.4 830.3 L1298.8 832.5 M1295.7 832.3 L1298.8 832.5 L1305.2 834.5 L1305.1 836.4 M1314.5 818.2 L1320.6 823.3 L1319.0 830.5 L1330.1 836.4 M1319.0 830.5 L1310.4 831.5 L1309.6 835.5 L1319.0 839.3 L1319.0 843.1 L1315.9 845.0 M1319.0 839.3 L1328.6 839.9 M1319.0 843.1 L1325.3 844.1 M1329.2 781.5 L1327.6 803.3 L1327.6 806.6 M1315.1 782.9 L1302.6 798.5 L1301.8 808.0 M1315.9 784.3 L1321.4 790.9 M1327.6 806.6 L1327.6 814.7 L1323.7 819.1 L1314.5 818.2 M1327.6 814.7 L1333.1 823.3 L1336.2 823.3 L1346.4 827.5 L1343.3 833.5 M1362.1 825.4 L1379.3 825.4 L1390.3 819.1 L1409.0 825.4 L1420.0 828.5 M1420.0 828.5 L1437.2 823.3 L1451.3 827.5 L1465.4 827.9 L1476.4 820.6 L1495.2 831.5 L1488.4 842.2 M1366.0 844.1 L1371.5 837.4 L1377.7 841.2 L1390.3 845.0 L1395.0 842.2 L1409.0 837.4 L1420.0 828.5 M1420.0 828.5 L1425.5 837.4 L1434.1 842.2 L1448.2 843.1 L1459.1 837.4 L1467.8 835.5 L1465.4 827.9 M1400.4 855.0 L1407.5 859.4 L1410.6 863.7 L1421.6 869.7 L1427.8 868.8 L1435.7 868.0 L1438.0 876.4 L1441.9 878.8 L1449.7 877.2 L1452.9 878.8 M1401.2 852.3 L1400.4 855.0 L1393.4 859.4 L1387.1 865.5 L1380.1 872.7 M1368.3 851.4 L1379.3 852.3 L1388.7 851.4 L1401.2 852.3 M1379.3 852.3 L1378.5 857.7 L1379.3 865.5 M1353.5 852.3 L1355.8 859.4 L1358.9 864.6 M1340.2 852.3 L1350.3 852.3 L1353.5 850.5 L1351.1 844.1 M1338.6 865.5 L1344.9 861.1 L1358.2 866.3 M1339.5 859.4 L1340.9 860.3 L1350.3 852.3 M1351.1 886.1 L1365.2 882.9 L1370.7 877.2 L1364.4 873.9 M1435.7 868.0 L1441.9 879.6 L1440.4 881.3 L1438.0 887.7 L1438.3 897.3 M1443.5 877.2 L1448.2 884.5 L1452.1 890.1 L1447.4 896.5 M1444.3 890.1 L1445.1 894.9 M1440.4 881.3 L1445.1 884.5 L1449.0 890.1 M1441.9 902.8 L1443.5 903.6 M1400.4 855.0 L1401.2 860.3 L1399.7 864.6 L1395.0 874.7 L1390.6 875.2 M1423.1 870.5 L1423.1 878.0 M1423.1 870.5 L1428.6 873.0 L1428.1 879.6 M1322.9 862.0 L1322.9 878.0 L1341.4 878.0 M1322.9 878.0 L1321.4 881.3 L1305.7 875.5 L1302.6 882.1 M1280.7 855.9 L1270.2 866.3 L1270.2 868.5 M1270.2 868.5 L1265.0 873.0 L1263.4 879.2 L1257.2 879.2 M1265.0 889.3 L1275.2 888.5 L1276.0 873.9 L1270.2 869.2 M1321.4 878.0 L1319.0 889.3 L1319.8 897.3 L1326.9 905.2 M1302.6 882.1 L1289.3 892.5 L1288.5 894.9 M1305.1 891.7 L1289.3 892.5 M1276.0 873.9 L1290.1 882.9 L1302.6 875.5 M1301.8 859.4 L1298.7 864.6 L1302.6 875.5 M1275.2 888.5 L1283.8 890.1 L1286.1 895.7 L1288.0 898.9 M1286.1 895.7 L1279.1 895.7 L1275.2 897.3 M1265.0 893.3 L1257.5 893.3 M1263.0 899.7 L1266.6 896.5 L1271.3 900.4 L1272.1 904.9 M1312.8 905.2 L1326.9 905.2 L1330.5 914.6 L1331.5 925.6 L1330.0 934.3 M1312.8 905.2 L1307.3 900.4 L1319.0 895.7 M1305.1 891.7 L1307.3 900.4 M1294.8 906.0 L1304.2 897.3 L1305.1 891.7 M1302.3 940.4 L1321.4 940.7 L1323.7 941.5 M1315.1 948.0 L1315.1 958.8 L1309.6 959.0 M1323.7 941.5 L1332.3 948.5 L1335.2 956.0 M1323.7 953.0 L1330.0 948.0 M1345.2 920.4 L1337.0 914.6 L1339.4 906.0 L1348.0 905.2 M1351.1 905.2 L1358.8 900.4 L1351.9 894.9 M1340.9 889.3 L1349.6 893.3 M1339.4 906.0 L1337.0 897.3 L1340.9 889.3 M1330.5 914.6 L1337.0 914.6 M1330.0 934.3 L1335.5 930.3 L1346.4 930.3 M1330.0 934.3 L1323.7 941.5 M1335.5 930.3 L1338.6 939.9 L1332.3 948.5 M1297.9 914.6 L1301.5 909.9 L1308.8 909.9 L1312.8 905.2 M1302.9 920.8 L1308.8 922.4 L1311.2 925.6 L1318.2 933.5 L1321.4 940.7 M1196.1 909.9 L1189.9 906.7 L1178.9 910.7 L1174.2 919.3 L1170.3 928.7 L1181.3 929.5 L1189.9 938.3 L1193.0 943.9 L1196.6 948.8 L1198.3 953.8 L1199.3 956.3 L1193.8 961.4 L1200.2 967.8 M1178.9 948.0 L1176.6 956.3 L1174.2 966.6 L1171.5 979.2 L1171.4 990.5 L1171.1 1002.7 L1176.6 1003.3 M1158.1 918.5 L1165.9 914.6 L1174.2 916.6 M1171.1 894.9 L1171.1 902.0 L1178.1 903.6 L1178.9 910.7 M1175.8 929.5 L1175.0 940.7 L1177.8 948.0 L1186.0 948.8 L1193.0 943.9 M1186.0 948.8 L1192.2 956.3 L1198.3 953.8 M1173.7 942.3 L1175.0 940.7 M1189.9 900.4 L1189.9 906.7 M1196.1 909.9 L1199.3 904.4 M1196.1 909.9 L1193.8 904.4 M1157.0 861.1 L1150.7 857.7 L1142.9 855.9" fill="none" stroke="#c4d9bc" stroke-width=".7" stroke-linejoin="round"/>
</svg><!--ENDMAP-->
<svg class="abs" style="left:0;top:0;overflow:visible" width="1920" height="1080">
<circle cx="1131.9" cy="851.9" r="13" fill="#f5c9a8" stroke="#ee8450" stroke-width="1.2"/>
<circle cx="1280.6" cy="820.9" r="5.5" fill="#f5c9a8" stroke="#ee8450" stroke-width="1.2"/>
<circle cx="1277" cy="848" r="5" fill="#f5c9a8" stroke="#ee8450" stroke-width="1.2"/>
<circle cx="1404" cy="882" r="8.5" fill="#f5c9a8" stroke="#ee8450" stroke-width="1.2"/>
<circle cx="1320.6" cy="960" r="5" fill="#f5c9a8" stroke="#ee8450" stroke-width="1.2"/>
<text x="1132" y="834" text-anchor="middle" font-family="Liberation Sans" font-size="10.5" fill="#333">United States (51)</text>
</svg>
<div class="abs" style="left:1003px;top:976px;width:53px;height:27px;background:#fff;border:1px solid #a3aeb8"></div>
<div class="abs" style="left:1029px;top:976px;width:1px;height:27px;background:#66727d"></div>
<svg class="abs" style="left:1003px;top:976px" width="53" height="27" viewBox="0 0 53 27"><path d="M10.5 14 H17.5" stroke="#4b5965" stroke-width="2"/><path d="M39.8 9.5 V18.8 M35.5 14 H44" stroke="#4b5965" stroke-width="1.8"/></svg>
<div class="abs" style="left:1597px;top:735px;width:314px;height:277px;background:#fff;border:1px solid #a9c9ea"></div>
<div class="abs" style="left:1600px;top:767px;width:314px;text-align:center;font-size:19px;color:#1e1e1e">Global</div>
<div class="abs" style="left:1600px;top:789px;width:314px;text-align:center;font-size:26px;color:#1e1e1e">82</div>
<div class="abs" style="left:1600px;top:819px;width:314px;text-align:center;font-size:12.5px;color:#1e1e1e">Assets with Location</div>
<div class="abs" style="left:1613px;top:855.0px;font-size:12.5px;color:#1e1e1e">United States</div><div class="abs" style="left:1840px;top:855.0px;width:51px;text-align:right;font-size:12.5px;font-weight:bold;color:#2a3a4a">51</div><div class="abs" style="left:1613px;top:876.0px;width:289px;height:1px;background:#e6e9ed"></div><div class="abs" style="left:1613px;top:884.0px;font-size:12.5px;color:#1e1e1e">India</div><div class="abs" style="left:1840px;top:884.0px;width:51px;text-align:right;font-size:12.5px;font-weight:bold;color:#2a3a4a">25</div><div class="abs" style="left:1613px;top:905.0px;width:289px;height:1px;background:#e6e9ed"></div><div class="abs" style="left:1613px;top:912.7px;font-size:12.5px;color:#1e1e1e">United Kingdom</div><div class="abs" style="left:1840px;top:912.7px;width:51px;text-align:right;font-size:12.5px;font-weight:bold;color:#2a3a4a">4</div><div class="abs" style="left:1613px;top:933.7px;width:289px;height:1px;background:#e6e9ed"></div><div class="abs" style="left:1613px;top:941.0px;font-size:12.5px;color:#1e1e1e">South Africa</div><div class="abs" style="left:1840px;top:941.0px;width:51px;text-align:right;font-size:12.5px;font-weight:bold;color:#2a3a4a">1</div><div class="abs" style="left:1613px;top:962.0px;width:289px;height:1px;background:#e6e9ed"></div><div class="abs" style="left:1613px;top:969.7px;font-size:12.5px;color:#1e1e1e">Spain</div><div class="abs" style="left:1840px;top:969.7px;width:51px;text-align:right;font-size:12.5px;font-weight:bold;color:#2a3a4a">1</div>
<svg class="abs" style="left:1894px;top:1061px" width="6" height="19" viewBox="0 0 6 19"><circle cx="3" cy="3" r="1.6" fill="#1a5fb0"/><circle cx="3" cy="9.5" r="1.6" fill="#1a5fb0"/><circle cx="3" cy="16" r="1.6" fill="#1a5fb0"/></svg>
</body></html>
